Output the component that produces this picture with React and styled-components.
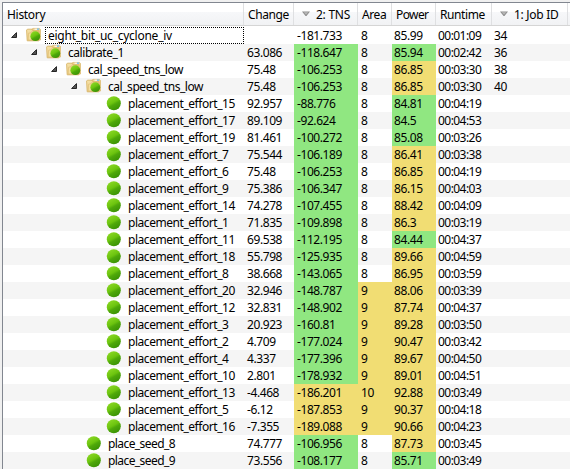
import React from "react";
import styled, { createGlobalStyle } from "styled-components";

const GlobalStyle = createGlobalStyle`
  * { box-sizing: border-box; }
  body { margin: 0; background: #f0f0f0; overflow: hidden; }
`;

const columns = "241px 50px 64px 34px 44px 56px 1fr";

const Panel = styled.main`
  width: 570px;
  height: 469px;
  padding: 2px 0 0 2px;
  background: #f0f0f0;
  font-family: "Noto Sans", "Open Sans", sans-serif;
  font-size: 12px;
  color: #000;
`;

const Tree = styled.div`
  height: 467px;
  border-top: 1px solid #828790;
  border-left: 1px solid #828790;
  background: #fff;
  overflow: hidden;
`;

const Header = styled.div`
  display: grid;
  grid-template-columns: 241px 50px 64px 34px 44px 56px 76px 1fr;
  height: 23px;
  border-bottom: 1px solid #d5d5d5;
  background: linear-gradient(#fff 0, #fff 9px, #f7f8fa 9px, #f1f2f4 100%);
`;

const HeaderCell = styled.div`
  display: flex;
  align-items: center;
  padding-left: ${(p) => p.$pad ?? 4}px;
  border-right: 1px solid #dfe0e2;
  letter-spacing: ${(p) => p.$track ?? -0.4}px;
  line-height: 17px;
  white-space: nowrap;
  &:last-child { border-right: 0; }
`;

const SortMark = styled.svg`
  width: 8px;
  height: 6px;
  margin-right: 6px;
  flex: none;
`;

const Rows = styled.div`
  padding-top: 1px;
`;

const Row = styled.div`
  display: grid;
  grid-template-columns: ${columns};
  height: 17px;
  background: ${(p) => (p.$odd ? "#f5f5f5" : "#fff")};
`;

const fills = { g: "#90e781", y: "#f1dd73" };

const Cell = styled.div`
  padding-left: ${(p) => p.$pad ?? 3}px;
  background: ${(p) => fills[p.$fill] || "transparent"};
  line-height: 17px;
  letter-spacing: ${(p) => p.$track ?? -0.42}px;
  white-space: nowrap;
`;

const NameCell = styled.div`
  display: flex;
  padding-left: ${(p) => p.$indent}px;
  line-height: 17px;
`;

const Arrow = styled.svg`
  width: 6px;
  height: 6px;
  margin: 5px 9px 0 0;
  flex: none;
`;

const IconBox = styled.svg`
  width: 16px;
  height: 16px;
  margin-right: 3px;
  flex: none;
`;

const Name = styled.div`
  flex: 1;
  height: 17px;
  padding-left: 2px;
  line-height: 15px;
  letter-spacing: ${(p) => p.$track}px;
  white-space: nowrap;
  border: 1px ${(p) => (p.$focused ? "dotted #000" : "solid transparent")};
`;

const Sort = () => (
  <SortMark viewBox="0 0 8 6">
    <path d="M0 .5H8L4.5 5H3.5Z" fill="#8e8e8e" />
    <path d="M1.8 1.3H6.2L4 3.8Z" fill="#b9b9b9" />
  </SortMark>
);

const Expander = () => (
  <Arrow viewBox="0 0 6 6">
    <path d="M5.5 .6V5.5H.6Z" fill="#555" stroke="#262626" />
  </Arrow>
);

const Defs = styled.svg`
  display: block;
  width: 0;
  height: 0;
`;

const Gradients = () => (
  <Defs>
    <defs>
      <linearGradient id="ball" x1=".2" y1="0" x2=".75" y2="1">
        <stop offset="0" stopColor="#8dd926" />
        <stop offset=".45" stopColor="#6cc40f" />
        <stop offset=".6" stopColor="#4fa80a" />
        <stop offset="1" stopColor="#389004" />
      </linearGradient>
      <linearGradient id="folder" x1="0" y1="0" x2="1" y2="1">
        <stop offset="0" stopColor="#f8e4ac" />
        <stop offset="1" stopColor="#e3bf70" />
      </linearGradient>
    </defs>
  </Defs>
);

const Ball = () => (
  <IconBox viewBox="0 0 16 16">
    <circle cx="7.8" cy="8.2" r="7" fill="url(#ball)" />
  </IconBox>
);

const Folder = () => (
  <IconBox viewBox="0 0 16 16">
    <path d="M6 2L7 1.4H13.5L14.5 2.6V13H6Z" fill="#efd28a" stroke="#d9b66a" strokeWidth=".7" />
    <path d="M8.5 2.2H13.2" stroke="#fff" />
    <path d="M11 2.1H13.2" stroke="#46a8e4" />
    <path d="M.6 3L1.4 2.2H6L7 3.8H13V13.8H1.2Z" fill="url(#folder)" stroke="#d8b467" strokeWidth=".9" />
    <path d="M2.6 6.1H5V5H12.5V13H2.2Z" fill="#f6dfa0" stroke="#dcb96e" strokeWidth=".6" />
    <circle cx="9.3" cy="9.2" r="4.9" fill="url(#ball)" />
  </IconBox>
);

const data = [
  [0, "eight_bit_uc_cyclone_iv", "", "-181.733", "8", "85.99", "00:01:09", "34", "---"],
  [1, "calibrate_1", "63.086", "-118.647", "8", "85.94", "00:02:42", "36", "g-g"],
  [2, "cal_speed_tns_low", "75.48", "-106.253", "8", "86.85", "00:03:30", "38", "g-y"],
  [3, "cal_speed_tns_low", "75.48", "-106.253", "8", "86.85", "00:03:30", "40", "g-y"],
  [4, "placement_effort_15", "92.957", "-88.776", "8", "84.81", "00:04:19", "", "g-g"],
  [4, "placement_effort_17", "89.109", "-92.624", "8", "84.5", "00:04:53", "", "g-g"],
  [4, "placement_effort_19", "81.461", "-100.272", "8", "85.08", "00:03:26", "", "g-g"],
  [4, "placement_effort_7", "75.544", "-106.189", "8", "86.41", "00:03:38", "", "g-y"],
  [4, "placement_effort_6", "75.48", "-106.253", "8", "86.85", "00:04:19", "", "g-y"],
  [4, "placement_effort_9", "75.386", "-106.347", "8", "86.15", "00:04:03", "", "g-y"],
  [4, "placement_effort_14", "74.278", "-107.455", "8", "88.42", "00:04:09", "", "g-y"],
  [4, "placement_effort_1", "71.835", "-109.898", "8", "86.3", "00:03:19", "", "g-y"],
  [4, "placement_effort_11", "69.538", "-112.195", "8", "84.44", "00:04:37", "", "g-g"],
  [4, "placement_effort_18", "55.798", "-125.935", "8", "89.66", "00:04:59", "", "g-y"],
  [4, "placement_effort_8", "38.668", "-143.065", "8", "86.95", "00:03:59", "", "g-y"],
  [4, "placement_effort_20", "32.946", "-148.787", "9", "88.06", "00:03:39", "", "gyy"],
  [4, "placement_effort_12", "32.831", "-148.902", "9", "87.74", "00:04:37", "", "gyy"],
  [4, "placement_effort_3", "20.923", "-160.81", "9", "89.28", "00:03:50", "", "gyy"],
  [4, "placement_effort_2", "4.709", "-177.024", "9", "90.47", "00:03:42", "", "gyy"],
  [4, "placement_effort_4", "4.337", "-177.396", "9", "89.67", "00:04:50", "", "gyy"],
  [4, "placement_effort_10", "2.801", "-178.932", "9", "89.01", "00:04:51", "", "gyy"],
  [4, "placement_effort_13", "-4.468", "-186.201", "10", "92.88", "00:03:49", "", "yyy"],
  [4, "placement_effort_5", "-6.12", "-187.853", "9", "90.37", "00:04:18", "", "yyy"],
  [4, "placement_effort_16", "-7.355", "-189.088", "9", "90.66", "00:04:23", "", "yyy"],
  [3, "place_seed_8", "74.777", "-106.956", "8", "87.73", "00:03:45", "", "g-y"],
  [3, "place_seed_9", "73.556", "-108.177", "8", "85.71", "00:03:49", "", "g-g"],
];

const nameTracking = (name) => {
  if (name.startsWith("eight")) return -0.25;
  if (name.startsWith("place_seed")) return -0.58;
  return -0.45;
};

function TreeRow({ item, index }) {
  const [depth, name, change, tns, area, power, runtime, job, fill] = item;
  const isFolder = index < 4;
  return (
    <Row $odd={index % 2 === 1}>
      <NameCell $indent={isFolder ? 8 + depth * 20 : 23 + depth * 20}>
        {isFolder && <Expander />}
        {isFolder ? <Folder /> : <Ball />}
        <Name $focused={index === 0} $track={nameTracking(name)}>{name}</Name>
      </NameCell>
      <Cell>{change}</Cell>
      <Cell $fill={fill[0]}>{tns}</Cell>
      <Cell $fill={fill[1]}>{area}</Cell>
      <Cell $fill={fill[2]} $pad={2}>{power}</Cell>
      <Cell $pad={2} $track={-0.55}>{runtime}</Cell>
      <Cell $pad={2}>{job}</Cell>
    </Row>
  );
}

export default function App() {
  return (
    <Panel>
      <GlobalStyle />
      <Gradients />
      <Tree>
        <Header>
          <HeaderCell $track={-0.3}>History</HeaderCell>
          <HeaderCell>Change</HeaderCell>
          <HeaderCell $pad={8} $track={-0.25}><Sort />2: TNS</HeaderCell>
          <HeaderCell>Area</HeaderCell>
          <HeaderCell $track={-0.6}>Power</HeaderCell>
          <HeaderCell>Runtime</HeaderCell>
          <HeaderCell $pad={8} $track={-0.3}><Sort />1: Job ID</HeaderCell>
          <HeaderCell />
        </Header>
        <Rows>
          {data.map((item, index) => (
            <TreeRow key={index} item={item} index={index} />
          ))}
        </Rows>
      </Tree>
    </Panel>
  );
}
